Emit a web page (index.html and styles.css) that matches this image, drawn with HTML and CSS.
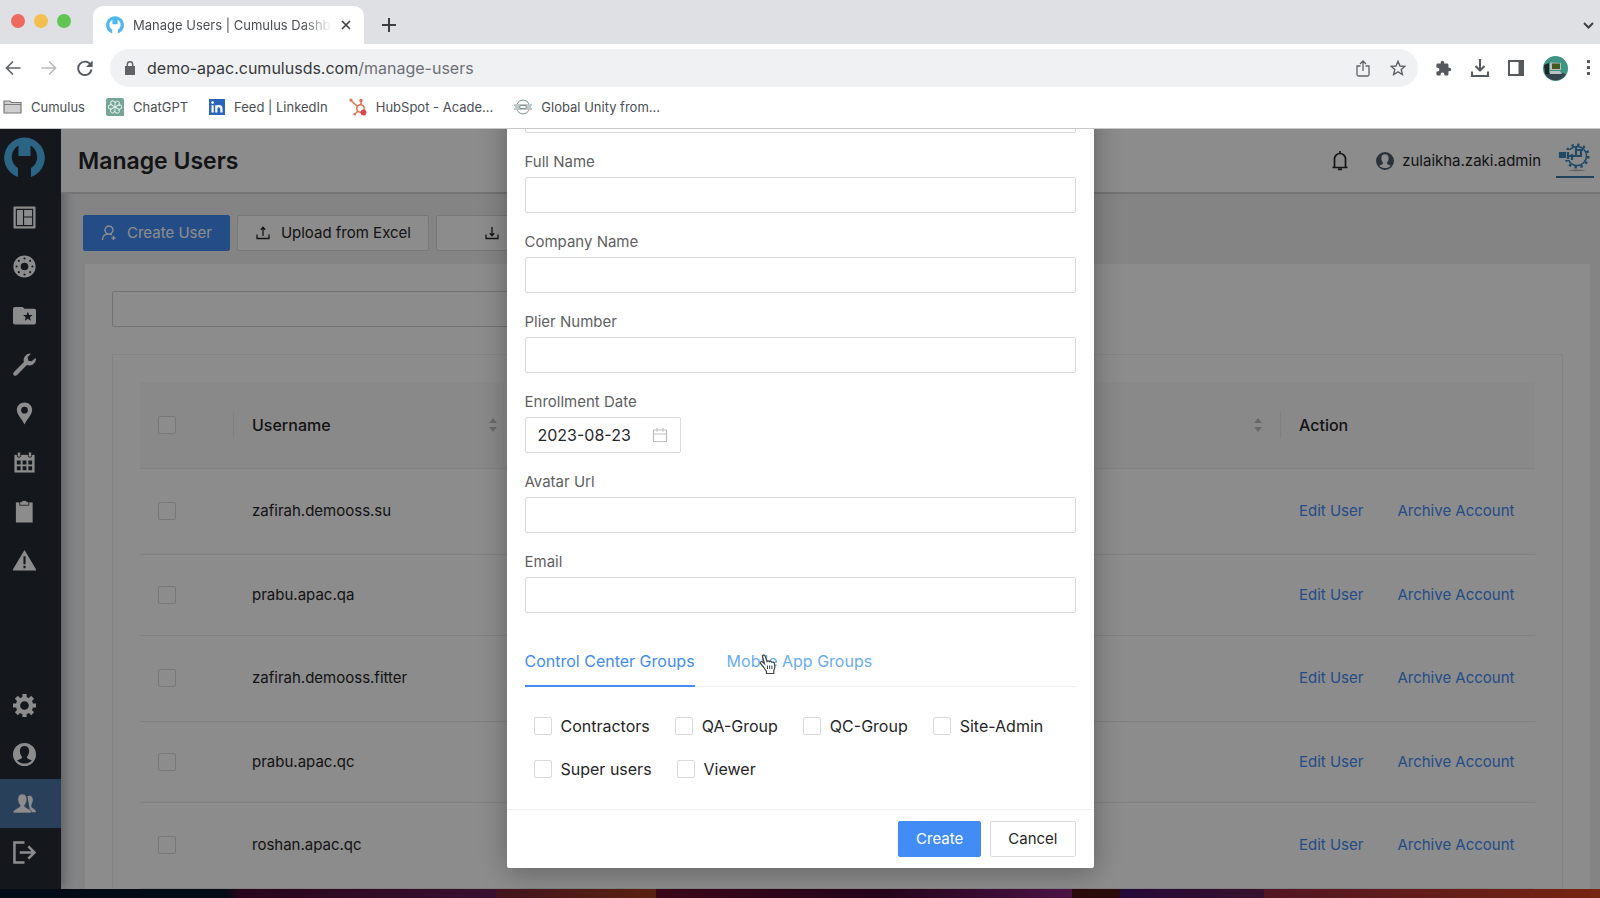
FILE: index.html
```html
<!DOCTYPE html>
<html lang="en">

<head>
    <meta charset="UTF-8">
    <meta name="viewport" content="width=device-width, initial-scale=1.0">
    <title>Manage Users | Cumulus Dashboard</title>
    <link rel="stylesheet" href="styles.css">
</head>

<body>
    <!-- Shared icons -->
    <svg class="sprite" aria-hidden="true">
        <symbol id="logo" viewBox="0 0 41 41">
            <path d="M14 40 A20.300 20.300 0 1 1 27 40 V31 A13 13 0 0 0 26.500 8.500 V19 H14.500 V8.500 A13 13 0 0 0 14 31 Z" fill="#51b8ef" />
        </symbol>
        <symbol id="upload" viewBox="0 0 16 16">
            <path d="M2 9.500 V13.500 H14 V9.500 M8 11 V2.500 M5.800 4.800 L8 2.300 L10.200 4.800" fill="none" stroke="currentColor" stroke-width="1.300" />
        </symbol>
        <symbol id="download" viewBox="0 0 16 16">
            <path d="M2 9.500 V13.500 H14 V9.500 M8 2 V10.500 M5.800 8.200 L8 10.700 L10.200 8.200" fill="none" stroke="currentColor" stroke-width="1.300" />
        </symbol>
        <symbol id="sort" viewBox="0 0 10 16">
            <path d="M1 6 L5 1 L9 6 Z M1 10 L5 15 L9 10 Z" fill="currentColor" />
        </symbol>
        <symbol id="person" viewBox="0 0 24 24">
            <path fill-rule="evenodd" d="M12 0 A12 12 0 1 0 12 24 A12 12 0 1 0 12 0 Z M12 3 C9 3 7 5 7.200 8.500 C7.300 11 8.200 13 9.500 14.500 C9.500 16.500 7 16.800 4.300 18.200 C8 22.500 16 22.500 19.700 18.200 C17 16.800 14.500 16.500 14.500 14.500 C15.800 13 16.700 11 16.800 8.500 C17 5 15 3 12 3 Z" fill="currentColor" />
        </symbol>
    </svg>

    <div class="browser">
        <div class="tab-strip">
            <div class="lights"><span class="red"></span><span class="yellow"></span><span class="green"></span></div>
            <div class="tab">
                <svg class="favicon"><use href="#logo" /></svg>
                <span class="tab-title">Manage Users | Cumulus Dashb</span>
                <button class="icon-btn" aria-label="Close tab">
                    <svg width="10" height="10" viewBox="0 0 10 10"><path d="M1 1 L9 9 M9 1 L1 9" stroke="#3c4043" stroke-width="1.600" /></svg>
                </button>
            </div>
            <button class="icon-btn new-tab" aria-label="New tab">
                <svg width="14" height="14" viewBox="0 0 14 14"><path d="M7 0 V14 M0 7 H14" stroke="#3c4043" stroke-width="2" /></svg>
            </button>
            <button class="icon-btn tab-search" aria-label="Search tabs">
                <svg width="11" height="7" viewBox="0 0 11 7"><path d="M1 1 L5.500 5.500 L10 1" fill="none" stroke="#3c4043" stroke-width="2" /></svg>
            </button>
        </div>

        <div class="toolbar">
            <div class="nav-btns">
                <button class="icon-btn" aria-label="Back">
                    <svg width="16" height="16" viewBox="0 0 16 16"><path d="M15.500 8 H1.500 M8 1.500 L1.500 8 L8 14.500" fill="none" stroke="#5f6368" stroke-width="1.700" /></svg>
                </button>
                <button class="icon-btn" aria-label="Forward">
                    <svg width="16" height="16" viewBox="0 0 16 16"><path d="M.5 8 H14.500 M8 1.500 L14.500 8 L8 14.500" fill="none" stroke="#b9bbbe" stroke-width="1.700" /></svg>
                </button>
                <button class="icon-btn" aria-label="Reload">
                    <svg width="16" height="16" viewBox="0 0 16 16"><path d="M13.600 4.800 A6.700 6.700 0 1 0 14.500 9.500" fill="none" stroke="#55595e" stroke-width="1.900" /><path d="M15.600 .5 V7 H9 Z" fill="#55595e" /></svg>
                </button>
            </div>
            <div class="address">
                <svg width="10" height="14" viewBox="0 0 10 14"><path d="M0 5 H10 V14 H0 Z" fill="#5f6368" /><path d="M2.300 6 V3.500 A2.700 2.700 0 0 1 7.700 3.500 V6" fill="none" stroke="#5f6368" stroke-width="1.400" /></svg>
                <span class="url">demo-apac.cumulusds.com<span>/manage-users</span></span>
                <button class="icon-btn" aria-label="Share">
                    <svg width="14" height="17" viewBox="0 0 14 17"><path d="M4.500 6 H1 V14.500 Q1 16 2.500 16 H11.500 Q13 16 13 14.500 V6 H9.500 M7 11 V1.500 M4 4 L7 1 L10 4" fill="none" stroke="#5f6368" stroke-width="1.300" /></svg>
                </button>
                <button class="icon-btn" aria-label="Bookmark">
                    <svg width="16" height="16" viewBox="0 0 16 16"><path d="M8 1.200 L10 6 L15 6.300 L11.200 9.500 L12.400 14.500 L8 11.800 L3.600 14.500 L4.800 9.500 L1 6.300 L6 6 Z" fill="none" stroke="#5f6368" stroke-width="1.400" /></svg>
                </button>
            </div>
            <div class="extras">
                <button class="icon-btn" aria-label="Extensions">
                    <svg width="17" height="17" viewBox="0 0 24 24"><path d="M20.500 11H19V7a2 2 0 0 0-2-2h-4V3.500a2.500 2.500 0 0 0-5 0V5H4a2 2 0 0 0-2 2v3.800h1.500a2.700 2.700 0 0 1 0 5.400H2V20a2 2 0 0 0 2 2h3.800v-1.500a2.700 2.700 0 0 1 5.400 0V22H17a2 2 0 0 0 2-2v-4h1.500a2.500 2.500 0 0 0 0-5z" fill="#55595e" /></svg>
                </button>
                <button class="icon-btn" aria-label="Downloads">
                    <svg width="18" height="18" viewBox="0 0 18 18"><path d="M1 12.500 V17 H17 V12.500 M9 0 V11 M4.500 7 L9 11.500 L13.500 7" fill="none" stroke="#55595e" stroke-width="2" /></svg>
                </button>
                <button class="icon-btn" aria-label="Side panel">
                    <svg width="16" height="16" viewBox="0 0 16 16"><path d="M1 1 H15 V15 H1 Z" fill="none" stroke="#55595e" stroke-width="2" /><path d="M10.500 1 H16 V15 H10.500 Z" fill="#55595e" /></svg>
                </button>
                <button class="icon-btn" aria-label="Profile">
                    <svg width="25" height="25" viewBox="0 0 25 25">
                        <circle cx="12.500" cy="12.500" r="12.500" fill="#3e9485" />
                        <path d="M2 18.500 L7 17 H20 L23 18.500 A12.500 12.500 0 0 1 2 18.500 Z" fill="#35454f" />
                        <path d="M1 9 L6 7 V18 H2 Z" fill="#1d2526" />
                        <path d="M7 6.500 L18 7 V14 H7 Z" fill="#b5c1ba" />
                        <path d="M9 7.500 H17 V13 H9 Z" fill="#46571f" />
                        <path d="M7 15 H17 L19 18 H7 Z" fill="#b7c0be" />
                    </svg>
                </button>
                <button class="icon-btn" aria-label="Menu">
                    <svg width="4" height="16" viewBox="0 0 4 16"><path d="M0 0 H3 V3 H0 Z M0 6 H3 V9 H0 Z M0 12 H3 V15 H0 Z" fill="#55595e" /></svg>
                </button>
            </div>
        </div>

        <div class="bookmarks">
            <a href="#">
                <svg width="19" height="14" viewBox="0 0 19 14"><path d="M1 3.500 V1 H7 L8.500 2.500 H18 V13 H1 Z M1 4.500 H18" fill="#cfcfcf" stroke="#77797b" stroke-width="1.200" /></svg>
                Cumulus
            </a>
            <a href="#">
                <svg width="18" height="18" viewBox="0 0 18 18">
                    <path d="M2 0 H16 Q18 0 18 2 V18 H2 Q0 18 0 16 V2 Q0 0 2 0 Z" fill="#75a596" />
                    <g fill="none" stroke="#e4f0ec" stroke-width=".9">
                        <path d="M9 9 V4.500 Q11 1.500 13.300 4 V8" />
                        <path d="M9 9 V4.500 Q11 1.500 13.300 4 V8" transform="rotate(60 9 9)" />
                        <path d="M9 9 V4.500 Q11 1.500 13.300 4 V8" transform="rotate(120 9 9)" />
                        <path d="M9 9 V4.500 Q11 1.500 13.300 4 V8" transform="rotate(180 9 9)" />
                        <path d="M9 9 V4.500 Q11 1.500 13.300 4 V8" transform="rotate(240 9 9)" />
                        <path d="M9 9 V4.500 Q11 1.500 13.300 4 V8" transform="rotate(300 9 9)" />
                    </g>
                </svg>
                ChatGPT
            </a>
            <a href="#">
                <svg width="16" height="16" viewBox="0 0 16 16">
                    <path d="M0 0 H16 V16 H0 Z" fill="#2a65bd" />
                    <circle cx="3.600" cy="3.600" r="1.400" fill="#fff" />
                    <path d="M3.600 6.200 V13.500 M7.300 6.200 V13.500 M7.300 9.500 Q7.600 7.200 9.900 7.200 Q12.400 7.200 12.400 9.800 V13.500" fill="none" stroke="#fff" stroke-width="2.200" />
                </svg>
                Feed | LinkedIn
            </a>
            <a href="#">
                <svg width="18" height="18" viewBox="0 0 18 18">
                    <g fill="none" stroke="#e2714f" stroke-width="1.500">
                        <circle cx="11.500" cy="10.500" r="3.700" />
                        <path d="M12 7 V2 M8.500 8.500 L2 2.500 M9 13 L6 16" />
                    </g>
                    <g fill="#e2714f"><circle cx="2" cy="2" r="1.600" /><circle cx="12" cy="2.500" r="1.700" /><circle cx="5.700" cy="16.300" r="1.300" /></g>
                    <circle cx="14.500" cy="14.500" r="2.900" fill="#d9484f" />
                </svg>
                HubSpot - Acade...
            </a>
            <a href="#">
                <svg width="18" height="16" viewBox="0 0 18 16"><g fill="none" stroke="#7f9390" stroke-width="1"><path d="M3 5 A6.500 6.500 0 0 1 15 5 M3 11 A6.500 6.500 0 0 0 15 11 M0 6 H18 M0 10 H18 M1 8 H5 M13 8 H17" /><rect x="5.500" y="6.500" width="7" height="3" rx="1.500" /></g></svg>
                Global Unity from...
            </a>
        </div>
    </div>

    <div class="app">
        <aside class="sidebar">
            <svg class="brand"><use href="#logo" /></svg>
            <nav class="side-nav">
                <a href="#" aria-label="Dashboard"><svg viewBox="0 0 24 24"><rect x=".5" y=".5" width="23" height="23" rx="1" fill="currentColor" /><path d="M3.500 3.500 H20.500 V20.500 H3.500 Z M11 3.500 V20.500 M11 11.500 H20.500" fill="none" stroke="#262a33" stroke-width="1.200" /></svg></a>
                <a href="#" aria-label="Flanges"><svg viewBox="0 0 24 24"><circle cx="12" cy="12" r="7.800" fill="none" stroke="currentColor" stroke-width="7.600" /><g fill="#262a33"><circle cx="12" cy="3.700" r="1.100" /><circle cx="12" cy="20.300" r="1.100" /><circle cx="3.700" cy="12" r="1.100" /><circle cx="20.300" cy="12" r="1.100" /><circle cx="6.100" cy="6.100" r="1.100" /><circle cx="17.900" cy="6.100" r="1.100" /><circle cx="6.100" cy="17.900" r="1.100" /><circle cx="17.900" cy="17.900" r="1.100" /></g></svg></a>
                <a href="#" aria-label="Projects"><svg viewBox="0 0 24 24"><path d="M2 3 H10 L12 5 H22 Q24 5 24 7 V19 Q24 21.500 22 21.500 H2 Q0 21.500 0 19 V5 Q0 3 2 3 Z" fill="currentColor" /><path d="M15.500 8 L16.900 11.400 L20.500 11.600 L17.700 13.900 L18.700 17.500 L15.500 15.500 L12.300 17.500 L13.300 13.900 L10.500 11.600 L14.100 11.400 Z" fill="#262a33" /></svg></a>
                <a href="#" aria-label="Tools"><svg viewBox="0 0 24 24"><path d="M24 6.500 A7 7 0 0 1 14.500 12.600 L4.200 23 Q2.200 24.500 .8 23.200 Q-.6 21.800 1 19.800 L11.400 9.500 A7 7 0 0 1 17.500 .5 L18.600 .7 L15.300 4.500 L16 8 L19.500 8.700 L23.300 5.300 Z" fill="currentColor" /></svg></a>
                <a href="#" aria-label="Locations"><svg viewBox="0 0 24 24"><path fill-rule="evenodd" d="M12 .5 C7.300 .5 4 4 4 8.200 C4 13 9 17.500 12 23.500 C15 17.500 20 13 20 8.200 C20 4 16.700 .5 12 .5 Z M12 5 A3.500 3.500 0 1 1 12 12 A3.500 3.500 0 1 1 12 5 Z" fill="currentColor" /></svg></a>
                <a href="#" aria-label="Calendar"><svg viewBox="0 0 24 24"><path d="M1.500 4 H22.500 V22.500 H1.500 Z" fill="currentColor" /><rect x="4.500" y="1" width="3.500" height="5.500" rx="1.500" fill="currentColor" stroke="#262a33" /><rect x="16" y="1" width="3.500" height="5.500" rx="1.500" fill="currentColor" stroke="#262a33" /><path d="M4 10 H8 V14 H4 Z M10 10 H14 V14 H10 Z M16 10 H20 V14 H16 Z M4 16 H8 V20 H4 Z M10 16 H14 V20 H10 Z M16 16 H20 V20 H16 Z" fill="#262a33" /></svg></a>
                <a href="#" aria-label="Reports"><svg viewBox="0 0 24 24"><path d="M3 2.500 H20.500 V23.500 H3 Z" fill="currentColor" /><path d="M7 2 Q10 2 10.300 .5 H13.300 Q13.600 2 16.500 2 V5.500 H7 Z" fill="currentColor" stroke="#262a33" stroke-width=".8" /></svg></a>
                <a href="#" aria-label="Alerts"><svg viewBox="0 0 24 24"><path d="M12 1 L24 21 V22.500 H0 V21 Z" fill="currentColor" /><path d="M12 7.500 V16 M12 17.500 V20" stroke="#262a33" stroke-width="2.200" /></svg></a>
            </nav>
            <nav class="side-nav bottom">
                <a href="#" aria-label="Settings"><svg viewBox="0 0 24 24"><circle cx="12" cy="12" r="6.800" fill="none" stroke="currentColor" stroke-width="4.500" /><path d="M12 0 V5 M12 19 V24 M0 12 H5 M19 12 H24 M3.500 3.500 L7 7 M17 17 L20.500 20.500 M20.500 3.500 L17 7 M7 17 L3.500 20.500" stroke="currentColor" stroke-width="4.400" /></svg></a>
                <a href="#" aria-label="Profile"><svg><use href="#person" /></svg></a>
                <a href="#" class="active" aria-label="Manage users"><svg viewBox="0 0 24 24"><path d="M15 4.500 C19 2.500 21.500 6 20.500 10 C20 12 19 13.500 19 15 C19.500 17 24 17.500 24 21 H18 Z" fill="currentColor" /><path d="M9.700 2 C6.500 2 4.800 4.500 5 8 C5.100 10.500 6.200 12.500 7.500 14 C7.500 17 0 17 0 22 H19.500 C19.500 17 12 17 12 14 C13.300 12.500 14.400 10.500 14.500 8 C14.700 4.500 13 2 9.700 2 Z" fill="currentColor" stroke="#4a76a3" stroke-width=".8" /></svg></a>
                <a href="#" aria-label="Log out"><svg viewBox="0 0 24 24"><path d="M12 1.500 H1.500 V22.500 H12 M7 12 H22 M16 5.500 L22.500 12 L16 18.500" fill="none" stroke="currentColor" stroke-width="2.600" /></svg></a>
            </nav>
        </aside>

        <main class="main">
            <header class="page-header">
                <h1>Manage Users</h1>
                <div class="account">
                    <button class="icon-btn" aria-label="Notifications">
                        <svg width="16" height="20" viewBox="0 0 16 20"><path d="M2.500 16 V8 A5.500 5.500 0 0 1 13.500 8 V16 M.5 16.500 H15.500 M8 0 V2.500 M6 18.300 H10" fill="none" stroke="#262626" stroke-width="1.700" /></svg>
                    </button>
                    <a href="#" class="user"><svg><use href="#person" /></svg>zulaikha.zaki.admin</a>
                    <svg class="org" viewBox="0 0 38 38">
                        <circle cx="21" cy="14" r="9.500" fill="none" stroke="#3d87ba" stroke-width="1.600" />
                        <circle cx="21" cy="14" r="11.300" fill="none" stroke="#3d87ba" stroke-width="2.600" stroke-dasharray="2.500 3.400" />
                        <path d="M0 8 H20 V18 H0 Z" fill="#fff" />
                        <path d="M4 11 H9 V15 H4 Z M11 14 H25 M12 10 V17 M16 12 V18 M20 5 V15 M25 8 V15 M20 8 H27" fill="#3d87ba" stroke="#3d87ba" stroke-width="2.200" />
                        <path d="M12 28.500 Q21 26.500 30 28.500 Q21 30 12 28.500 Z" fill="#b5b5b5" />
                        <path d="M0 34 H38 V36 H0 Z" fill="#3d76a2" />
                    </svg>
                </div>
            </header>

            <div class="actions">
                <button class="btn primary">
                    <svg width="16" height="16" viewBox="0 0 16 16"><path d="M1.500 15 C1.500 11 4 9 7.500 9 Q9.500 9 11 10 M7.500 9 A4 4 0 1 1 8.500 9 M12.500 11 V15 M10.500 13 H14.500" fill="none" stroke="currentColor" stroke-width="1.400" /></svg>
                    Create User
                </button>
                <button class="btn"><svg width="16" height="16"><use href="#upload" /></svg>Upload from Excel</button>
                <button class="btn export" aria-label="Export"><svg width="16" height="16"><use href="#download" /></svg></button>
            </div>

            <section class="card">
                <input type="text" class="search" aria-label="Search users">
                <div class="table-box">
                    <table>
                        <thead>
                            <tr>
                                <th class="col-check"><input type="checkbox" aria-label="Select all"></th>
                                <th class="col-user"><div>Username<svg class="sorter"><use href="#sort" /></svg></div></th>
                                <th><div><svg class="sorter"><use href="#sort" /></svg></div></th>
                                <th class="col-action">Action</th>
                            </tr>
                        </thead>
                        <tbody>
                            <tr>
                                <td><input type="checkbox" aria-label="Select zafirah.demooss.su"></td>
                                <td>zafirah.demooss.su</td>
                                <td></td>
                                <td><div class="links"><a href="#">Edit User</a><a href="#">Archive Account</a></div></td>
                            </tr>
                            <tr>
                                <td><input type="checkbox" aria-label="Select prabu.apac.qa"></td>
                                <td>prabu.apac.qa</td>
                                <td></td>
                                <td><div class="links"><a href="#">Edit User</a><a href="#">Archive Account</a></div></td>
                            </tr>
                            <tr>
                                <td><input type="checkbox" aria-label="Select zafirah.demooss.fitter"></td>
                                <td>zafirah.demooss.fitter</td>
                                <td></td>
                                <td><div class="links"><a href="#">Edit User</a><a href="#">Archive Account</a></div></td>
                            </tr>
                            <tr>
                                <td><input type="checkbox" aria-label="Select prabu.apac.qc"></td>
                                <td>prabu.apac.qc</td>
                                <td></td>
                                <td><div class="links"><a href="#">Edit User</a><a href="#">Archive Account</a></div></td>
                            </tr>
                            <tr>
                                <td><input type="checkbox" aria-label="Select roshan.apac.qc"></td>
                                <td>roshan.apac.qc</td>
                                <td></td>
                                <td><div class="links"><a href="#">Edit User</a><a href="#">Archive Account</a></div></td>
                            </tr>
                        </tbody>
                    </table>
                </div>
            </section>
        </main>

        <!-- Create user dialog, scrolled to its end -->
        <div class="overlay">
            <form class="modal" role="dialog" aria-label="Create User">
                <div class="modal-body">
                    <div class="field"><input type="text" aria-label="Username"></div>
                    <div class="field"><label for="fullName">Full Name</label><input type="text" id="fullName"></div>
                    <div class="field"><label for="company">Company Name</label><input type="text" id="company"></div>
                    <div class="field"><label for="plier">Plier Number</label><input type="text" id="plier"></div>
                    <div class="field">
                        <label for="enrollDate">Enrollment Date</label>
                        <div class="date-box">
                            <input type="text" id="enrollDate" value="2023-08-23">
                            <svg width="16" height="16" viewBox="0 0 16 16"><path d="M1.500 3 H14.500 V14.500 H1.500 Z M1.500 7 H14.500 M5 1 V4.500 M11 1 V4.500" fill="none" stroke="#bfbfbf" stroke-width="1.200" /></svg>
                        </div>
                    </div>
                    <div class="field"><label for="avatar">Avatar Url</label><input type="text" id="avatar"></div>
                    <div class="field"><label for="email">Email</label><input type="text" id="email"></div>

                    <div class="tabs">
                        <button type="button" class="active">Control Center Groups</button>
                        <button type="button" class="hover">Mobile App Groups
                            <svg class="pointer" width="18" height="21" viewBox="0 0 18 21"><path d="M4.500 13 L1.500 9.500 Q.8 8.300 2 7.700 Q3 7.300 4 8.300 L5.500 9.800 L3.600 3 Q3.400 1.500 4.600 1.200 Q5.800 1 6.300 2.300 L8 7.500 Q9.300 6 10.400 7.700 Q11.900 6.500 12.800 8.200 Q14.800 7.500 15.400 9.700 Q16.500 13.500 14.800 16.500 V19.500 H7.500 V17.500 Z" fill="#fff" stroke="#444" stroke-width="1.200" /><path d="M8.500 11.500 V15 M10.700 11.500 V15 M12.900 11.500 V15" stroke="#444" /></svg>
                        </button>
                    </div>

                    <div class="groups">
                        <div class="group-row">
                            <label><input type="checkbox">Contractors</label>
                            <label><input type="checkbox">QA-Group</label>
                            <label><input type="checkbox">QC-Group</label>
                            <label><input type="checkbox">Site-Admin</label>
                        </div>
                        <div class="group-row">
                            <label><input type="checkbox">Super users</label>
                            <label><input type="checkbox">Viewer</label>
                        </div>
                    </div>
                </div>
                <div class="modal-footer">
                    <button type="button" class="btn primary">Create</button>
                    <button type="button" class="btn">Cancel</button>
                </div>
            </form>
        </div>
    </div>

    <div class="desktop-edge"></div>
</body>

</html>
```

FILE: styles.css
```css
* {
    box-sizing: border-box;
}

body {
    margin: 0;
    height: 100vh;
    display: flex;
    flex-direction: column;
    overflow: hidden;
    font-family: Inter, "Liberation Sans", sans-serif;
    font-size: 16px;
    line-height: 24px;
    color: #262626;
    background: #fff;
}

button,
input {
    font: inherit;
    color: inherit;
}

a {
    color: inherit;
    text-decoration: none;
}

svg {
    display: block;
    flex-shrink: 0;
}

.sprite {
    position: absolute;
    width: 0;
    height: 0;
}

.icon-btn {
    border: none;
    background: none;
    padding: 0;
    cursor: pointer;
}

/* Browser window */
.browser {
    padding-bottom: 1px;
    border-bottom: 1px solid #c8c8c8;
    color: #4b4e52;
}

.tab-strip {
    height: 44px;
    display: flex;
    align-items: center;
    padding: 6px 6px 0 11px;
    background: #dee0e4;
}

.lights {
    display: flex;
    gap: 9px;
    padding-bottom: 8px;
    width: 82px;
}

.lights span {
    width: 14px;
    height: 14px;
    border-radius: 50%;
}

.red {
    background: #ec6a5e;
}

.yellow {
    background: #f4bf4f;
}

.green {
    background: #61c554;
}

.tab {
    align-self: stretch;
    width: 271px;
    display: flex;
    align-items: center;
    gap: 9px;
    padding: 0 13px;
    background: #fff;
    border-radius: 10px 10px 0 0;
}

.favicon {
    width: 18px;
    height: 18px;
}

.tab-title {
    flex: 1;
    overflow: hidden;
    white-space: nowrap;
    font-size: 13px;
    -webkit-mask-image: linear-gradient(to right, #000 85%, transparent);
    mask-image: linear-gradient(to right, #000 85%, transparent);
}

.new-tab {
    margin-left: 18px;
}

.tab-search {
    margin-left: auto;
}

.toolbar {
    display: flex;
    align-items: center;
    padding: 5px 9px 0 5px;
}

.nav-btns {
    display: flex;
    gap: 20px;
    width: 105px;
}

.address {
    flex: 1;
    height: 38px;
    display: flex;
    align-items: center;
    gap: 20px;
    padding: 0 12px 0 15px;
    border-radius: 19px;
    background: #f0f1f3;
}

.url {
    flex: 1;
    margin-left: -8px;
    color: #37393c;
}

.url span {
    color: #6d7074;
}

.extras {
    display: flex;
    align-items: center;
    gap: 19px;
    margin-left: 17px;
}

.bookmarks {
    height: 40px;
    display: flex;
    align-items: center;
    gap: 21px;
    padding: 0 3px;
    font-size: 13px;
}

.bookmarks a {
    display: flex;
    align-items: center;
    gap: 9px;
}

/* Application */
.app {
    position: relative;
    flex: 1;
    min-height: 0;
    display: flex;
    overflow: hidden;
    background: #f0f1f3;
    font-size: 15px;
}

.sidebar {
    width: 61px;
    display: flex;
    flex-direction: column;
    padding: 8px 0 12px;
    background: #262a33;
    box-shadow: 2px 0 12px rgba(0, 0, 0, 0.35);
    color: #fff;
}

.brand {
    width: 41px;
    height: 41px;
    margin: 0 0 15px 4px;
}

.side-nav a {
    display: flex;
    align-items: center;
    height: 49px;
    padding-left: 13px;
}

.side-nav svg {
    width: 23px;
    height: 23px;
}

.side-nav .active {
    background: #4a76a3;
}

.bottom {
    margin-top: auto;
}

.main {
    flex: 1;
}

.page-header {
    height: 65px;
    display: flex;
    align-items: center;
    justify-content: space-between;
    padding: 0 6px 0 17px;
    background: #fff;
    border-bottom: 2px solid #d2d2d2;
}

.page-header h1 {
    margin: 0;
    font-size: 23px;
    font-weight: 600;
}

.account {
    display: flex;
    align-items: center;
    gap: 28px;
}

.user {
    display: flex;
    align-items: center;
    gap: 8px;
}

.user svg {
    width: 18px;
    height: 18px;
    color: #4d5c6d;
}

.org {
    width: 38px;
    height: 38px;
    margin-left: -13px;
}

.actions {
    display: flex;
    gap: 7px;
    padding: 21px 22px 22px;
}

.btn {
    height: 36px;
    display: flex;
    align-items: center;
    justify-content: center;
    gap: 10px;
    padding: 0 17px;
    border: 1px solid #d9d9d9;
    border-radius: 2px;
    background: #fff;
    cursor: pointer;
}

.btn.primary {
    background: #428cf6;
    border-color: #428cf6;
    color: #fff;
}

.btn.export {
    width: 112px;
}

.card {
    margin: -9px 10px 0 24px;
    padding: 27px;
    background: #fff;
}

.search {
    display: block;
    width: 40%;
    height: 36px;
    border: 1px solid #d0d0d0;
    border-radius: 2px;
    margin-bottom: 27px;
}

.table-box {
    border: 1px solid #f0f0f0;
    padding: 27px;
}

table {
    width: 100%;
    border-collapse: collapse;
    table-layout: fixed;
}

th,
td {
    height: 86px;
    padding: 0 18px;
    text-align: left;
    border-bottom: 1px solid #ececec;
}

tbody tr:nth-child(even) td {
    height: 81px;
}

th {
    font-size: 16px;
    font-weight: 500;
    background: linear-gradient(#e9e9e9, #e9e9e9) no-repeat right center / 1px 26px #fafafa;
}

th:last-child {
    background-image: none;
}

th div {
    display: flex;
    align-items: center;
}

.col-check {
    width: 94px;
}

.col-user {
    width: 282px;
}

.col-action {
    width: 254px;
}

.sorter {
    width: 10px;
    height: 16px;
    margin-left: auto;
    color: #bfbfbf;
}

.links {
    display: flex;
    gap: 34px;
    white-space: nowrap;
    color: #428cf6;
}

input[type="checkbox"] {
    appearance: none;
    display: block;
    width: 18px;
    height: 18px;
    margin: 0;
    border: 1px solid #d9d9d9;
    border-radius: 2px;
    background: #fff;
}

/* Dialog */
.overlay {
    position: absolute;
    inset: 0;
    display: flex;
    flex-direction: column;
    align-items: center;
    justify-content: flex-end;
    padding-bottom: 21px;
    overflow: hidden;
    background: rgba(0, 0, 0, 0.45);
}

.modal {
    width: 587px;
    background: #fff;
    border-radius: 2px;
    box-shadow: 0 4px 28px rgba(0, 0, 0, 0.3);
}

.modal-body {
    padding: 0 18px 28px;
}

.field {
    margin-bottom: 17px;
}

.field label {
    display: block;
    margin-bottom: 3px;
    color: #5f5f5f;
}

.field > input,
.date-box {
    display: flex;
    width: 100%;
    height: 36px;
    border: 1px solid #d9d9d9;
    border-radius: 2px;
}

.date-box {
    width: 156px;
    align-items: center;
    justify-content: space-between;
    padding: 0 12px;
}

.date-box input {
    width: 100px;
    padding: 0;
    border: none;
    font-size: 16px;
}

.tabs {
    display: flex;
    gap: 32px;
    margin-top: 36px;
    border-bottom: 1px solid #f0f0f0;
    font-size: 16px;
}

.tabs button {
    position: relative;
    margin-bottom: -1px;
    padding: 0 0 12px;
    border: none;
    border-bottom: 2px solid transparent;
    background: none;
    color: #428cf6;
    white-space: nowrap;
    cursor: pointer;
}

.tabs .active {
    border-color: #428cf6;
}

.tabs .hover {
    color: #69adf0;
}

/* Mouse pointer over the tab label */
.pointer {
    position: absolute;
    left: 32px;
    top: 5px;
}

.groups {
    display: flex;
    flex-direction: column;
    gap: 19px;
    padding: 27px 9px 0;
    font-size: 16px;
}

.group-row {
    display: flex;
    gap: 25px;
}

.group-row label {
    display: flex;
    align-items: center;
    gap: 9px;
    white-space: nowrap;
}

.modal-footer {
    display: flex;
    justify-content: flex-end;
    gap: 9px;
    padding: 11px 18px;
    border-top: 1px solid #f0f0f0;
}

/* Strip of the desktop below the window */
.desktop-edge {
    height: 9px;
    background: linear-gradient(to right, #020b16 0, #020b16 14%, #28051a 15%, #3a1030 31%, #43141f 31%, #5a2210 41%, #3a0618 41%, #24041a 55%, #4b1245 67%, #2b0a0b 67%, #2b0a0b 70%, #240a38 70%, #38102c 79%, #521523 79%, #762511 100%);
}
```
